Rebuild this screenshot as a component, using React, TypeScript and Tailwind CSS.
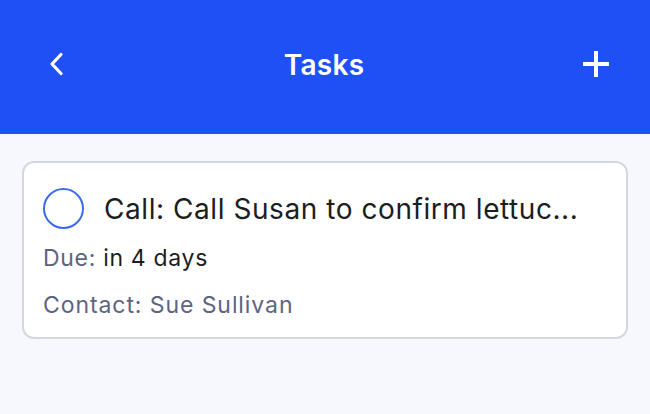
export default function App() {
  return (
    <div className="flex h-[414px] w-[650px] flex-col bg-[#f7f8fd] font-['Inter','Noto_Sans',sans-serif]">
      <header className="flex h-[134px] shrink-0 items-center justify-between bg-[#1f50f6] pb-[7px] pl-[46px] pr-[40px] text-white">
        <button className="flex h-7 w-5 items-center justify-center">
          <svg width="18" height="26" viewBox="0 0 18 26" fill="none">
            <path d="M14 3.5 L5 13 L14 22.5" stroke="white" strokeWidth="3.2" strokeLinecap="round" strokeLinejoin="round" />
          </svg>
        </button>
        <h1 className="pt-[3px] text-[28px] font-semibold tracking-[0.01em]">Tasks</h1>
        <button className="flex h-7 w-7 items-center justify-center">
          <svg width="28" height="28" viewBox="0 0 28 28" fill="none">
            <path d="M14 1 V27 M1 14 H27" stroke="white" strokeWidth="4" />
          </svg>
        </button>
      </header>

      <main className="px-[22px] pt-[27px]">
        <div className="rounded-xl border-2 border-[#d3d7e3] bg-white px-[19px] pb-[17px] pt-[25px]">
          <div className="flex items-center gap-[20px]">
            <span className="h-[41px] w-[41px] shrink-0 rounded-full border-2 border-[#3d6be8]" />
            <span className="text-[28px] leading-[34px] tracking-[0.02em] text-[#1c1d22]">
              Call: Call Susan to confirm lettuc...
            </span>
          </div>
          <div className="mt-[14px] text-[23px] leading-[30px] tracking-[0.03em]">
            <span className="text-[#5d6480]">Due:</span>{" "}
            <span className="text-[#1c1d22]">in 4 days</span>
          </div>
          <div className="mt-[17px] text-[23px] leading-[30px] tracking-[0.04em] text-[#5d6480]">
            Contact: Sue Sullivan
          </div>
        </div>
      </main>
    </div>
  );
}
